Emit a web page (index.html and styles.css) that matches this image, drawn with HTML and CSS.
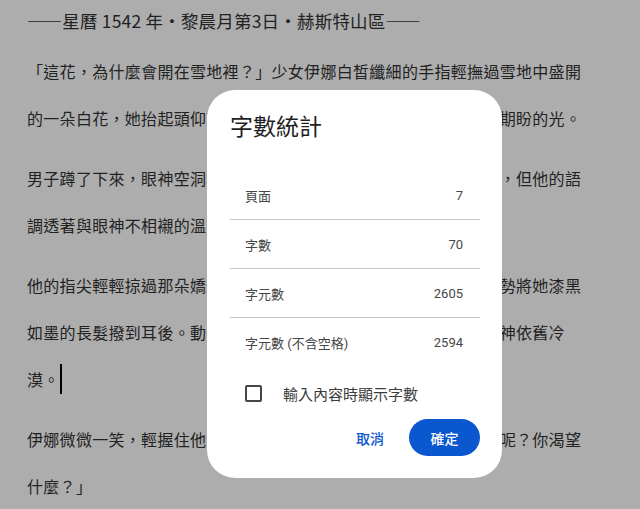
FILE: index.html
```html
<!DOCTYPE html>
<html lang="zh-Hant">
<head>
	<meta charset="UTF-8">
	<meta name="viewport" content="width=device-width, initial-scale=1.0">
	<title>字數統計</title>
	<link rel="stylesheet" href="styles.css">
</head>
<body>

	<!-- 文件內容 -->
	<div class="doc">
		<p class="doc-title">——星曆 1542 年・黎晨月第3日・赫斯特山區——</p>
		<p>「這花，為什麼會開在雪地裡？」少女伊娜白皙纖細的手指輕撫過雪地中盛開的一朵白花，她抬起頭仰望著靜靜站在身旁的男子，眼中閃著某種期盼的光。</p>
		<p>男子蹲了下來，眼神空洞地望著那朵小花，沉默了許久才開口回答，但他的語調透著與眼神不相襯的溫柔：「因為它想被妳看見。」</p>
		<p>他的指尖輕輕掠過那朵嬌豔的白色花瓣，起身時又以極其自然的姿勢將她漆黑如墨的長髮撥到耳後。動作輕柔得近乎小心翼翼，然而那男子的眼神依舊冷漠。<span class="caret"></span></p>
		<p>伊娜微微一笑，輕握住他的大手，抬起頭輕聲問道：「那麼你自己呢？你渴望什麼？」</p>
	</div>

	<div class="scrim"></div>

	<!-- 字數統計對話框 -->
	<div class="dialog" role="dialog">
		<h2 class="dialog-title">字數統計</h2>
		<div class="stats">
			<div class="stat-row"><span>頁面</span><span class="stat-value">7</span></div>
			<div class="stat-row"><span>字數</span><span class="stat-value">70</span></div>
			<div class="stat-row"><span>字元數</span><span class="stat-value">2605</span></div>
			<div class="stat-row"><span>字元數 (不含空格)</span><span class="stat-value">2594</span></div>
		</div>
		<label class="show-count">
			<span class="checkbox"></span>
			<span>輸入內容時顯示字數</span>
		</label>
		<div class="dialog-actions">
			<button class="btn-text">取消</button>
			<button class="btn-filled">確定</button>
		</div>
	</div>

</body>
</html>
```

FILE: styles.css
```css
        body {
            margin: 0;
            padding: 0;
            background-color: #fff;
            color: #333;
            font-family: "Noto Sans CJK TC", sans-serif;
        }
        .doc {
            width: 562px;
            padding-left: 27px;
            font-size: 16px;
            line-height: 47px;
            letter-spacing: 0.3px;
            text-spacing-trim: space-all;
        }
        .doc p {
            margin: 13px 0 0;
        }
        .doc .doc-title {
            margin: 0 0 -7px;
            font-size: 17.5px;
            letter-spacing: 0.2px;
            line-height: 42px;
        }
        .caret {
            display: inline-block;
            width: 2px;
            height: 30px;
            background-color: #000;
            vertical-align: -8px;
        }
        .scrim {
            position: fixed;
            top: 0;
            left: 0;
            right: 0;
            bottom: 0;
            background-color: rgba(0, 0, 0, 0.32); /* затемнение */
        }
        .dialog {
            position: fixed;
            left: 207px;
            top: 90px;
            width: 295px;
            box-sizing: border-box;
            padding: 22px 22px 22px 23px;
            background-color: #fff;
            border-radius: 28px;
            font-family: Roboto, "Noto Sans CJK TC", sans-serif;
            color: #444746;
        }
        .dialog-title {
            margin: 0;
            font-size: 23px;
            line-height: 32px;
            font-weight: 400;
            color: #1f1f1f;
        }
        .stats {
            margin-top: 27px;
        }
        .stat-row {
            display: flex;
            justify-content: space-between;
            align-items: center;
            height: 49px;
            box-sizing: border-box;
            padding: 0 17px 0 15px;
            border-bottom: 1px solid #c4c7c5;
            font-size: 13px;
        }
        .stat-row:last-child {
            border-bottom: none;
        }
        .show-count {
            display: flex;
            align-items: center;
            gap: 21px;
            height: 36px;
            margin-top: 8px;
            padding-left: 15px;
            font-size: 15px;
            color: #3c3c3c;
        }
        .checkbox {
            width: 17px;
            height: 17px;
            box-sizing: border-box;
            border: 2px solid #444746;
            border-radius: 2px;
        }
        .dialog-actions {
            display: flex;
            justify-content: flex-end;
            align-items: center;
            margin-top: 8px;
        }
        .dialog-actions button {
            height: 37px;
            border: none;
            border-radius: 19px;
            font-family: Roboto, "Noto Sans CJK TC", sans-serif;
            font-size: 14px;
            font-weight: 500;
            cursor: pointer;
        }
        .btn-text {
            padding: 0 12px;
            margin-right: 13px;
            background: none;
            color: #0b57d0;
        }
        .btn-filled {
            width: 71px;
            padding: 0;
            background-color: #0b57d0;
            color: #fff;
        }
```
